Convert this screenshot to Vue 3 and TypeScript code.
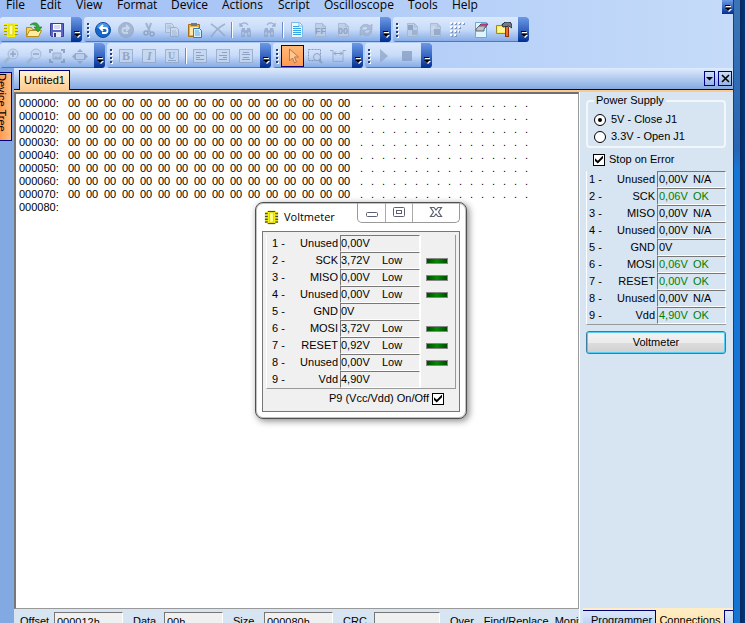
<script setup lang="ts">
import { ref } from 'vue'

interface Tool { id: string; label: string; active?: boolean; sep?: boolean }
interface Group { handle: boolean; tools: Tool[] }
interface Pin { no: number; name: string; value: string; state: string }

const menus = ['File', 'Edit', 'View', 'Format', 'Device', 'Actions', 'Script', 'Oscilloscope', 'Tools', 'Help']

const page = '<path d="M3.500 1.500h7l3 3v10h-10z" fill="#bccbe3" stroke="#a3b3cc"/><path d="M10.500 1.500v3h3" fill="none" stroke="#a3b3cc"/>'
const frame = '<rect x="1.500" y="1.500" width="13" height="13" fill="#c6d7f0" stroke="#94a8c8"/>'
const binoculars = '<path d="M3 9l1-3h3v2h2v-2h3l1 3v6H9v-4H7v4H3z" fill="#91a7ca"/><path d="M5 10v3M11 10v3" stroke="#c3d4ee"/>'

const icons: Record<string, string> = {
  chip: '<path d="M1 2h14v2H1zM1 5h14v2H1zM1 8h14v2H1zM1 11h14v2H1z" fill="#a59c00"/><path d="M1 2h3v1H1zM1 5h3v1H1zM1 8h3v1H1zM1 11h3v1H1zM12 2h3v1h-3zM12 5h3v1h-3zM12 8h3v1h-3zM12 11h3v1h-3z" fill="#f3ee00"/><rect x="4" y="1" width="8" height="14" fill="#f8f400"/><rect x="6" y="3" width="4" height="10" fill="#ffff92" stroke="#d8cb28"/>',
  open: '<path d="M.5 14.500v-9h5l1 2h6v7z" fill="#f5d25c" stroke="#b68b21"/><path d="M.5 14.500l3-6h12l-3 6z" fill="#ffed9c" stroke="#b68b21"/><path d="M4 3C8-1 13 1 13 5h3l-4 5-4-5h3C10 3 7 2 4 3z" fill="#2eae35" stroke="#147b1d" stroke-width=".6"/>',
  save: '<path d="M1.500 1.500h13v13h-12l-1-1z" fill="#5b64c7" stroke="#383c95"/><rect x="4" y="2" width="8" height="6" fill="#fff"/><path d="M5 4h6M5 6h6" stroke="#adb5d8"/><rect x="4" y="10" width="8" height="5" fill="#e4e7f7"/><rect x="5" y="11" width="2" height="4" fill="#30388c"/>',
  undo: '<circle cx="8" cy="8" r="7.500" fill="#1765c5" stroke="#0d4b9e"/><path d="M2 6a6 5 0 0 1 12 0" fill="#4c95e3"/><path d="M5 6h5a2.500 2.500 0 0 1 0 5H7M8 3L5 6l3 3" fill="none" stroke="#fff" stroke-width="1.800"/>',
  redo: '<circle cx="8" cy="8" r="7.500" fill="#99acca" stroke="#91a4c3"/><path d="M11 6H7a2.500 2.500 0 0 0 0 5h3M8 3l3 3-3 3" fill="none" stroke="#c8d6eb" stroke-width="1.800"/>',
  cut: '<path d="M5 1l4 9M10 1L7 10" stroke="#94a8c7" stroke-width="2"/><circle cx="5" cy="11" r="2" fill="none" stroke="#879bbb" stroke-width="1.500"/><circle cx="11" cy="12" r="2" fill="none" stroke="#879bbb" stroke-width="1.500"/>',
  copy: '<path d="M1.500 1.500h6l2 2v7h-8z" fill="#c5d5ec" stroke="#9eafca"/><path d="M6.500 5.500h6l2 2v7h-8z" fill="#c9d8ee" stroke="#93a6c4"/><path d="M3 4h4M3 6h3M8 9h4M8 11h5M8 13h5" stroke="#a2b3cd"/>',
  paste: '<path d="M1.500 2.500h11v12h-11z" fill="#e9b04a" stroke="#a66d1a"/><rect x="4" y="1" width="6" height="3" fill="#717885"/><path d="M3 5h8v8H3z" fill="#ffe9ad"/><path d="M6.500 6.500h6l2 2v7h-8z" fill="#d5efff" stroke="#3879b5"/><path d="M8 9h4M8 11h5M8 13h5" stroke="#62a7dc"/>',
  delete: '<path d="M1 2c5 3 9 7 14 12M15 2C9 5 5 9 1 15" fill="none" stroke="#91a5c5" stroke-width="1.500"/>',
  find: binoculars + '<path d="M2 1v3h3M2 4c2-4 6-4 8-1" fill="none" stroke="#90a4c5" stroke-width="1.300"/>',
  next: binoculars + '<path d="M14 1v3h-3M14 4c-2-4-6-4-8-1" fill="none" stroke="#90a4c5" stroke-width="1.300"/>',
  list: '<path d="M2.500.5h8l3 3v12h-11z" fill="#e9f8ff" stroke="#78b9e8"/><path d="M4 4.500h6M4 6.500h8M4 8.500h8M4 10.500h8M4 12.500h8" stroke="#35a5e5"/><path d="M10 1v3h3" fill="#fff" stroke="#78b9e8"/>',
  ff: page + '<text x="3" y="12" font-size="9" font-weight="bold" fill="#8095b8">FF</text>',
  zero: page + '<text x="3" y="12" font-size="9" font-weight="bold" fill="#8095b8">00</text>',
  refresh: '<path d="M2 7c1-5 7-6 10-3l2-2v6H8l2-2C8 4 5 4 4 7zM14 9c-1 5-7 6-10 3l-2 2V8h6l-2 2c2 2 5 2 6-1z" fill="#a2b4cf" stroke="#8da1c1" stroke-width=".6"/>',
  swap1: page + '<rect x="4" y="3" width="5" height="5" fill="#8296b8"/><rect x="8" y="8" width="5" height="5" fill="#99abc8"/>',
  swap2: page + '<rect x="4" y="4" width="4" height="4" fill="#c7d6eb"/><rect x="7" y="7" width="6" height="6" fill="#8ea3c4"/>',
  dots: '<path d="M1 2h15M1 6h12M1 10h9M1 14h6" stroke="#8296b6" stroke-width="2" stroke-dasharray="2 2"/><path d="M0 1h15M0 5h12M0 9h9M0 13h6" stroke="#f8fbff" stroke-width="2" stroke-dasharray="2 2"/>',
  eraser: '<path d="M2.500.5h11v15h-11z" fill="#dff4ff" stroke="#6ba9d2"/><path d="M3 7l5-5h7l-4 5z" fill="#f43e96" stroke="#79325d"/><path d="M3 7l3-3h7l-2 3v2H3z" fill="#bbc3cc" stroke="#5e6571"/>',
  build: '<path d="M.5 3.500h5l1-2h5v10H.500z" fill="#ffec55" stroke="#988b20"/><path d="M2 5h8v5H2z" fill="#fff69b"/><path d="M6 3l3-3h5l2 3v3l-3-2-6 1z" fill="#737d89" stroke="#222b35"/><path d="M11 5v10" stroke="#962a0d" stroke-width="4"/><path d="M11 5v9" stroke="#ef6c23" stroke-width="2"/>',
  zoomin: '<path d="M6 10l-5 5" stroke="#9eb2d1" stroke-width="3"/><circle cx="10" cy="6" r="5" fill="#c5d7f0" stroke="#9bb0d0"/><path d="M7 6h6M10 3v6" stroke="#839abd" stroke-width="1.500"/>',
  zoomout: '<path d="M6 10l-5 5" stroke="#9eb2d1" stroke-width="3"/><circle cx="10" cy="6" r="5" fill="#c5d7f0" stroke="#9bb0d0"/><path d="M7 6h6" stroke="#839abd" stroke-width="1.500"/>',
  fit: '<path d="M1 5V2h3M12 2h3v3M15 11v3h-3M4 14H1v-3" fill="none" stroke="#8197bb" stroke-width="2"/><path d="M4 5h8v6H4z" fill="#b6c8e3" stroke="#8fa4c5"/><path d="M4 11l3-3 2 2 2-2 1 3" fill="#91a6c7"/>',
  expand: '<rect x="3.500" y="5.500" width="9" height="6" fill="#bacce7" stroke="#8aa0c2"/><path d="M8 1l3 3H5zM8 16l3-3H5zM0 8.500l3-3v6zM16 8.500l-3-3v6z" fill="#8aa0c2"/>',
  bold: frame + '<text x="4" y="12" font-size="12" font-family="Liberation Serif, serif" font-weight="bold" fill="#879bbd">B</text>',
  italic: frame + '<text x="6" y="12" font-size="12" font-family="Liberation Serif, serif" font-style="italic" font-weight="bold" fill="#879bbd">I</text>',
  underline: frame + '<text x="4" y="11" font-size="10" font-family="Liberation Serif, serif" font-weight="bold" fill="#879bbd">U</text><path d="M4 12.500h8" stroke="#879bbd"/>',
  left: frame + '<path d="M4 4.500h5M4 7.500h8M4 9.500h4M4 11.500h8" stroke="#7f94b7"/>',
  right: frame + '<path d="M7 4.500h5M4 7.500h8M8 9.500h4M4 11.500h8" stroke="#7f94b7"/>',
  center: frame + '<path d="M5 4.500h6M4 6.500h8M5 9.500h6M4 11.500h8" stroke="#7f94b7"/>',
  pointer: '<path d="M4.500 1v12l3-3 2 5 2-1-2-5h4z" fill="#ffc891" stroke="#a97960"/>',
  select: '<rect x="1.500" y="1.500" width="12" height="11" fill="none" stroke="#758bad" stroke-dasharray="2 1"/><circle cx="10" cy="9" r="3.500" fill="#c2d3ec" stroke="#8399bc"/><path d="M12 12l3 3" stroke="#8399bc" stroke-width="2"/>',
  measure: '<path d="M0 2.500h3v11h10v-11h3" fill="none" stroke="#8ea3c4"/><path d="M4 5.500h8M6 3.500l-2 2 2 2M10 3.500l2 2-2 2" fill="none" stroke="#7f95b9"/>',
  play: '<path d="M4 1l8 7-8 7z" fill="#92a9cd"/>',
  stop: '<rect x="3" y="3" width="10" height="10" fill="#879fc6"/>',
}

const lit = new Set(['chip', 'open', 'save', 'undo', 'paste', 'list', 'dots', 'eraser', 'build', 'pointer'])

const t = (id: string, label: string, sep = false, active = false): Tool => ({ id, label, sep, active })
const rows: Group[][] = [
  [
    { handle: false, tools: [t('chip', 'Select device'), t('open', 'Open'), t('save', 'Save')] },
    { handle: true, tools: [t('undo', 'Undo'), t('redo', 'Redo'), t('cut', 'Cut'), t('copy', 'Copy'), t('paste', 'Paste'), t('delete', 'Delete'), t('find', 'Find', true), t('next', 'Find next'), t('list', 'Edit buffer', true), t('ff', 'Fill FF'), t('zero', 'Fill 00'), t('refresh', 'Refresh')] },
    { handle: true, tools: [t('swap1', 'Read'), t('swap2', 'Write'), t('dots', 'Blank check'), t('eraser', 'Erase'), t('build', 'Options')] },
  ],
  [
    { handle: false, tools: [t('zoomin', 'Zoom in'), t('zoomout', 'Zoom out'), t('fit', 'Fit'), t('expand', 'Expand')] },
    { handle: true, tools: [t('bold', 'Bold'), t('italic', 'Italic'), t('underline', 'Underline'), t('left', 'Align left', true), t('right', 'Align right'), t('center', 'Center')] },
    { handle: true, tools: [t('pointer', 'Pointer', false, true), t('select', 'Select area'), t('measure', 'Measure')] },
    { handle: true, tools: [t('play', 'Run'), t('stop', 'Stop')] },
  ],
]

const addresses = ['000000:', '000010:', '000020:', '000030:', '000040:', '000050:', '000060:', '000070:', '000080:']

const names = ['Unused', 'SCK', 'MISO', 'Unused', 'GND', 'MOSI', 'RESET', 'Unused', 'Vdd']
const toPins = (values: string[], states: string[]): Pin[] =>
  names.map((name, i) => ({ no: i + 1, name, value: values[i], state: states[i] }))

const pins = toPins(
  ['0,00V', '0,06V', '0,00V', '0,00V', '0V', '0,06V', '0,00V', '0,00V', '4,90V'],
  ['N/A', 'OK', 'N/A', 'N/A', '', 'OK', 'OK', 'N/A', 'OK'],
)
const meter = toPins(
  ['0,00V', '3,72V', '0,00V', '0,00V', '0V', '3,72V', '0,92V', '0,00V', '4,90V'],
  ['', 'Low', 'Low', 'Low', '', 'Low', 'Low', 'Low', ''],
)

const supply = ref('5')
const stopOnError = ref(true)
const p9 = ref(true)
const offset = ref('000012h')
const data = ref('00h')
const size = ref('000080h')
const crc = ref('')
</script>

<template>
  <div class="window">
    <div class="app">
      <nav class="menubar">
        <a v-for="m in menus" :key="m" href="#">{{ m }}</a>
        <button class="cap menu-cap" aria-label="More menus">
          <svg width="11" height="14" viewBox="0 0 11 14"><path d="M4 6h5v1H4zM4 9h6l-3 3z" fill="#fff" /><path d="M3 5h5v1H3zM3 8h6l-3 3z" fill="#000" /></svg>
        </button>
      </nav>

      <div v-for="(row, r) in rows" :key="r" class="toolrow">
        <div v-for="(g, i) in row" :key="i" class="toolbar">
          <span v-if="g.handle" class="handle"><i></i><i></i><i></i><i></i></span>
          <template v-for="tool in g.tools" :key="tool.id">
            <span v-if="tool.sep" class="sep"></span>
            <button class="tool" :class="{ active: tool.active, dim: !lit.has(tool.id) }" :aria-label="tool.label">
              <svg width="16" height="16" viewBox="0 0 16 16" v-html="icons[tool.id]"></svg>
            </button>
          </template>
          <button class="cap" aria-label="Toolbar options">
            <svg width="11" height="14" viewBox="0 0 11 14"><path d="M4 6h5v1H4zM4 9h6l-3 3z" fill="#fff" /><path d="M3 5h5v1H3zM3 8h6l-3 3z" fill="#000" /></svg>
          </button>
        </div>
      </div>

      <div class="body">
        <aside class="dock"><button class="dock-tab"><span>Device Tree</span></button></aside>
        <div class="workspace">
          <div class="tabstrip">
            <button class="doc-tab">Untited1</button>
            <span class="fill"></span>
            <button class="strip-btn narrow" aria-label="Document list"><svg width="9" height="9" viewBox="0 0 9 9"><path d="M1 3h7L4.500 6.500z" /></svg></button>
            <button class="strip-btn" aria-label="Close document"><svg width="9" height="9" viewBox="0 0 9 9"><path d="M1 1l7 7M8 1L1 8" stroke="#000" stroke-width="1.600" /></svg></button>
          </div>

          <div class="panes">
            <div class="left-pane">
              <main class="editor">
                <table class="hex">
                  <tbody>
                    <tr v-for="(a, i) in addresses" :key="a">
                      <td class="addr">{{ a }}</td>
                      <template v-if="i < 8">
                        <td v-for="n in 16" :key="'h' + n" class="byte">00</td>
                        <td v-for="n in 16" :key="'d' + n" class="dot">.</td>
                      </template>
                    </tr>
                  </tbody>
                </table>
              </main>
              <footer class="status">
                <label>Offset<input v-model="offset" class="wide" /></label>
                <label>Data<input v-model="data" class="short" /></label>
                <label>Size<input v-model="size" class="wide" /></label>
                <label>CRC<input v-model="crc" class="medium" /></label>
                <span>Over</span><span>Find/Replace</span><span>Monitor</span>
              </footer>
            </div>

            <aside class="side">
              <div class="side-body">
                <fieldset>
                  <legend>Power Supply</legend>
                  <label><input v-model="supply" type="radio" name="supply" value="5" />5V - Close J1</label>
                  <label><input v-model="supply" type="radio" name="supply" value="3" />3.3V - Open J1</label>
                </fieldset>
                <label class="stop"><input v-model="stopOnError" type="checkbox" />Stop on Error</label>
                <table class="pins">
                  <tbody>
                    <tr v-for="p in pins" :key="p.no">
                      <td class="no">{{ p.no }} -</td>
                      <td class="name">{{ p.name }}</td>
                      <td class="val" :class="{ ok: p.state === 'OK' }"><span>{{ p.value }}</span><span>{{ p.state }}</span></td>
                    </tr>
                  </tbody>
                </table>
                <button class="meter-btn">Voltmeter</button>
              </div>
              <div class="side-tabs">
                <button>Programmer</button>
                <button class="on">Connections</button>
                <button class="rest" aria-label="More panels"></button>
              </div>
            </aside>
          </div>
        </div>
      </div>
    </div>
    <div class="edge"></div>

    <section class="dialog" aria-label="Voltmeter">
      <header>
        <svg class="chip" width="15" height="15" viewBox="0 0 16 16"><g v-html="icons.chip"></g><path d="M4 1.500h8M4 14.500h8M1 4h3M1 7h3M1 10h3M1 13h3M12 4h3M12 7h3M12 10h3M12 13h3" stroke="#333" /></svg>
        <h1>Voltmeter</h1>
        <div class="captions">
          <button class="min" aria-label="Minimize"><svg width="14" height="12" viewBox="0 0 14 12"><rect x="1.500" y="6.500" width="11" height="4" rx="1" fill="#fff" stroke="#5d6071" /></svg></button>
          <button class="max" aria-label="Maximize"><svg width="14" height="12" viewBox="0 0 14 12"><rect x="1.500" y="1.500" width="11" height="9" rx="1" fill="#fff" stroke="#5d6071" /><rect x="4.500" y="4.500" width="5" height="3" fill="#fff" stroke="#5d6071" /></svg></button>
          <button class="close" aria-label="Close"><svg width="14" height="12" viewBox="0 0 14 12"><path d="M1.500 1.500h3.500l2 2.500 2-2.500h3.500L9.500 6l3 4.500H9L7 8l-2 2.500H1.500l3-4.500z" fill="#fff" stroke="#5d6071" stroke-width="1.200" /></svg></button>
        </div>
      </header>
      <div class="dialog-body">
        <table class="meter">
          <tbody>
            <tr v-for="p in meter" :key="p.no">
              <td class="no">{{ p.no }} -</td>
              <td class="name">{{ p.name }}</td>
              <td class="val"><span>{{ p.value }}</span><span>{{ p.state }}</span></td>
              <td class="led"><i v-if="p.state"></i></td>
            </tr>
          </tbody>
        </table>
        <label class="p9">P9 (Vcc/Vdd) On/Off<input v-model="p9" type="checkbox" /></label>
      </div>
    </section>
  </div>
</template>

<style>
body { margin: 0; overflow: hidden; }
</style>

<style scoped>
* { box-sizing: border-box; }
.window { position: relative; display: flex; height: 100vh; overflow: hidden; font: 11px/13px "Liberation Sans", Arial, sans-serif; color: #000; }
button { font: inherit; color: inherit; padding: 0; margin: 0; border: 0; background: none; }
svg { display: block; flex: none; }
.app { flex: 1; min-width: 0; display: flex; flex-direction: column; background: linear-gradient(90deg, #9dbdf4, #b5cff8 60%, #c5dbf8); }
.edge { width: 12px; border-left: 1px solid #173e76; background: linear-gradient(90deg, transparent 6px, #08285b 6px, #003a86 12px), linear-gradient(#3b75b5, #2665b4 150px, #1677d9 170px, #1674d3); }

.menubar { display: grid; grid-template-columns: 34px 36px 41px 54px 51px 56px 46px 84px 44px 1fr 11px; height: 17px; padding-left: 6px; }
.menubar a { color: #000; text-decoration: none; font: 12px/9px "Open Sans", "Noto Sans", sans-serif; white-space: nowrap; }
.menubar .menu-cap { height: 14px; border-radius: 0; margin: 0; padding: 0; }

.toolrow { display: flex; gap: 2px; height: 25px; margin-bottom: 1px; }
.toolrow + .toolrow { margin-bottom: 0; }
.toolbar { display: flex; align-items: center; border-radius: 3px; overflow: hidden; background: linear-gradient(#dce9fd, #c7dbf8 50%, #86ace7 96%, #5377b6 96%); }
.handle { width: 8px; display: flex; flex-direction: column; align-items: center; gap: 2px; }
.handle i { width: 2px; height: 2px; background: #27417d; box-shadow: 1px 1px #fff; }
.sep { width: 5px; height: 16px; background: linear-gradient(90deg, transparent 1px, #6a8ccb 1px, #6a8ccb 2px, #fff 2px, #fff 3px, transparent 3px); }
.tool { width: 23px; height: 22px; padding-right: 2px; display: flex; align-items: center; justify-content: center; }
.tool.dim svg { opacity: .8; }
.tool.active { padding: 0; border: 1px solid #000080; background: linear-gradient(#ffb878, #ff9a4f); }
.cap { width: 11px; height: 100%; margin-left: 2px; padding-bottom: 2px; display: flex; align-items: flex-end; justify-content: center; background: linear-gradient(#6c99e6, #2c5cb8 60%, #002f91); border-radius: 0 3px 3px 0; }

.body { flex: 1; min-height: 0; display: flex; }
.dock { width: 14px; padding-top: 4px; background: #82a9e1; }
.dock-tab { display: flex; justify-content: flex-end; align-items: flex-start; width: 12px; height: 69px; overflow: hidden; border: 1px solid #000080; border-left: 0; background: linear-gradient(90deg, #ff9a50, #ffbd80); }
.dock-tab span { writing-mode: vertical-rl; line-height: 12px; margin-right: 3px; }
.workspace { flex: 1; min-width: 0; display: flex; flex-direction: column; }
.tabstrip { display: flex; align-items: center; height: 24px; padding: 0 1px 2px 5px; gap: 3px; background: linear-gradient(#dfebfd, #84a9e1 21px, #000080 21px, #000080 22px, #ffc98c 22px); }
.doc-tab { align-self: flex-end; width: 51px; height: 20px; border: 1px solid #000080; border-bottom: 0; background: linear-gradient(#fff3d2, #ffcb91); white-space: nowrap; }
.fill { flex: 1; }
.strip-btn { width: 14px; height: 15px; margin-top: -1px; display: flex; align-items: center; justify-content: center; border: 1px solid #000080; }
.strip-btn.narrow { width: 11px; }

.panes { flex: 1; min-height: 0; display: flex; background: #d7e4f2; }
.left-pane { flex: 1; min-width: 0; display: flex; flex-direction: column; }
.editor { flex: 1; min-height: 0; overflow: hidden; background: #fff; border: 1px solid #999; border-width: 2px 1px 1px 2px; border-top-color: #707070; border-left-color: #777; padding: 3px 3px 0; }
.hex { border-collapse: collapse; table-layout: fixed; }
.hex td { padding: 0; height: 13px; line-height: 13px; }
.hex .addr { width: 49px; min-width: 49px; }
.hex .byte { width: 18px; min-width: 18px; }
.hex .dot { width: 11px; min-width: 11px; padding-left: 4px; }
.status { display: flex; height: 25px; margin-bottom: -11px; padding: 3px 0 0 6px; gap: 10px; white-space: nowrap; overflow: hidden; }
.status label { flex: none; display: flex; justify-content: space-between; line-height: 19px; }
.status label:nth-child(1) { width: 103px; }
.status label:nth-child(2) { width: 90px; }
.status label:nth-child(3) { width: 100px; }
.status label:nth-child(4) { width: 97px; }
.status span { flex: none; line-height: 19px; }
.status span + span + span { margin-left: -4px; }
.status input { height: 20px; padding: 0 2px; font: inherit; color: inherit; border: 1px solid; border-color: #777 #fff #fff #777; background: #f0f0f0; }
.wide { width: 69px; }
.short { width: 59px; }
.medium { width: 66px; }

.side { width: 154px; display: flex; flex-direction: column; border-left: 1px solid #fff; }
.side-body { flex: 1; min-height: 0; padding: 2px 7px 0 6px; }
fieldset { margin: 0; padding: 4px 6px 1px 6px; height: 54px; min-width: 0; border: 2px solid #f2f7fc; border-radius: 4px; }
legend { padding: 0 2px; line-height: 13px; }
fieldset label { display: flex; align-items: center; gap: 5px; height: 17px; }
input[type="radio"], input[type="checkbox"] { appearance: none; flex: none; margin: 0; width: 12px; height: 12px; border: 1px solid #000; background: #fff; display: grid; place-items: center; }
input[type="radio"] { border-radius: 50%; }
input[type="radio"]:checked::before { content: ""; width: 4px; height: 4px; border-radius: 50%; background: #000; }
input[type="checkbox"]:checked::before { content: ""; width: 8px; height: 8px; background: #000; clip-path: polygon(0 35%, 35% 65%, 100% 0, 100% 35%, 35% 100%, 0 70%); }
.stop { display: flex; align-items: center; gap: 4px; height: 17px; margin: 3px 0 0 7px; }
.pins, .meter { border-spacing: 0; table-layout: fixed; }
.pins { width: 140px; margin-top: 3px; border-left: 1px solid #fff; border-bottom: 1px solid #999; }
.pins td, .meter td { height: 17px; padding: 0; white-space: nowrap; line-height: 13px; }
.pins .no { width: 26px; padding-left: 2px; }
.pins .name, .meter .name { text-align: right; padding-right: 2px; }
.val { border: 1px solid; border-color: #777 #fff #fff #777; }
.pins .val { width: 69px; }
.val span { display: inline-block; }
.pins .val span { padding-left: 1px; }
.pins .val span:first-child { width: 34px; }
.val.ok { color: #008000; }
.meter-btn { display: block; width: 140px; height: 23px; margin-top: 6px; border: 1px solid #3b7c9f; border-radius: 3px; box-shadow: inset 0 0 0 1px #53cdf2; background: linear-gradient(#f3f3f3, #ebebeb 50%, #dddddd 50%, #d0d0d0); }
.side-tabs { display: flex; height: 25px; margin: 0 0 -10px 3px; padding-top: 2px; background: #ffedc3; }
.side-tabs button { width: 73px; border: 1px solid #000080; border-width: 1px 1px 0 0; background: linear-gradient(#dbe8fb, #a8c5f0); padding: 0 0 3px 5px; }
.side-tabs .on { width: 68px; border: 0; background: linear-gradient(#ffedc3, #ffe1a8); padding: 0 0 2px; }
.side-tabs .rest { flex: 1; width: auto; border-width: 1px 0 0 1px; padding: 0; }

.dialog { position: absolute; left: 255px; top: 202px; width: 212px; padding: 0 6px 6px; border: 1px solid #505050; border-radius: 8px; background: #fff; box-shadow: 0 0 0 1px #9999 inset, 2px 2px 7px #0007; }
header { display: flex; height: 28px; padding-left: 2px; }
.chip { margin-top: 7px; }
h1 { flex: 1; margin: 0 0 0 5px; font: 11px/28px "Open Sans", "Noto Sans", sans-serif; }
.captions { display: flex; height: 20px; border: 1px solid #999; border-top: 0; border-radius: 0 0 5px 5px; }
.captions button { width: 27px; display: flex; align-items: center; justify-content: center; padding-bottom: 1px; }
.captions button + button { border-left: 1px solid #aaa; }
.captions .close { width: 47px; }
.dialog-body { padding: 3px; border: 1px solid #777; background: #f0f0f0; }
.meter { width: 190px; border-left: 1px solid #fff; border-bottom: 1px solid #999; }
.meter .no { padding-left: 5px; width: 30px; }
.meter .val { width: 80px; }
.meter .val span:first-child { width: 41px; }
.meter .led { width: 36px; border-right: 1px solid #999; border-left: 1px solid #fff; padding-left: 5px; }
.led i { display: block; width: 22px; height: 6px; border: 1px solid #888; background: linear-gradient(90deg, #004b00, #008c00 50%, #004b00); }
.p9 { display: flex; align-items: center; justify-content: flex-end; gap: 3px; height: 19px; padding-right: 12px; }
</style>
